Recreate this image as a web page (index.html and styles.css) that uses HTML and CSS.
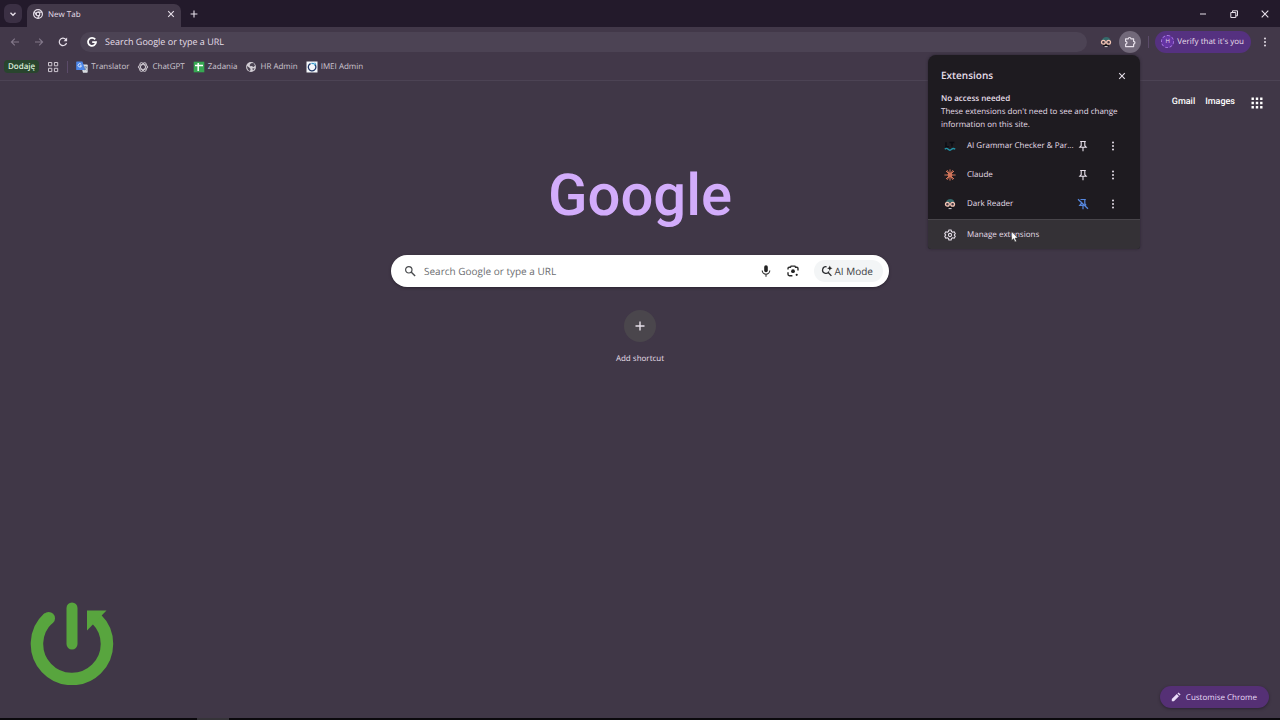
FILE: index.html
```html
<!DOCTYPE html>
<html lang="en">
<head>
  <meta charset="UTF-8">
  <title>New Tab</title>
  <link rel="stylesheet" href="styles.css">
</head>
<body>
<svg class="defs" aria-hidden="true">
  <symbol id="dots" viewBox="0 0 12 12"><circle cx="6" cy="2.4" r="1"/><circle cx="6" cy="6" r="1"/><circle cx="6" cy="9.6" r="1"/></symbol>
  <symbol id="close" viewBox="0 0 12 12"><path d="M3.2 3.2l5.6 5.6M8.8 3.2L3.2 8.8" fill="none" stroke="currentColor" stroke-width="1.1"/></symbol>
  <symbol id="plus" viewBox="0 0 12 12"><path d="M6 1.5v9M1.5 6h9" fill="none" stroke="currentColor" stroke-width="1.4"/></symbol>
  <symbol id="pin" viewBox="0 0 12 12"><path d="M3.2 1.5h5.6M4.2 1.5v4.2L2.8 7.3h6.4L7.8 5.7V1.5M6 7.3v4" fill="none" stroke="currentColor" stroke-width="1.1"/></symbol>
  <symbol id="reader" viewBox="0 0 12 12">
    <path d="M1.8 4.6C2.4 2.2 4 1 6.3 1c2.5 0 3.8 1.4 4.2 3.6z" fill="#346a6b"/>
    <path d="M2.5 8h7L8.6 10.6H3.5z" fill="#151318"/>
    <circle cx="3.4" cy="6.3" r="1.9" fill="#423844" stroke="#f4c6b5" stroke-width="1.3"/>
    <circle cx="8.6" cy="6.3" r="1.9" fill="#423844" stroke="#f4c6b5" stroke-width="1.3"/>
    <path d="M4.6 10.6h3" stroke="#d7d0d6" stroke-width="1"/>
  </symbol>
</svg>

<header class="browser">
  <div class="tabstrip">
    <button class="tab-search" aria-label="Search tabs"><svg class="ico" viewBox="0 0 12 12"><path d="M3.5 4.8L6 7.2l2.5-2.4" fill="none" stroke="currentColor" stroke-width="1.4"/></svg></button>
    <div class="tab">
      <svg class="ico" viewBox="0 0 12 12"><circle cx="6" cy="6" r="4.4" fill="none" stroke="currentColor" stroke-width="1.2"/><circle cx="6" cy="6" r="1.8" fill="none" stroke="currentColor" stroke-width="1.2"/><path d="M6 4.1h4M4.4 7L2.3 3.6M7.6 7l-2 3.5" stroke="currentColor" stroke-width="1.2"/></svg>
      <span class="tab-title">New Tab</span>
      <button class="plain" aria-label="Close tab"><svg class="ico"><use href="#close"/></svg></button>
    </div>
    <button class="plain new-tab" aria-label="New tab"><svg class="ico" viewBox="0 0 12 12"><path d="M6 2.6v6.8M2.6 6h6.8" stroke="currentColor" stroke-width="1.1"/></svg></button>
    <div class="window-buttons">
      <button class="plain" aria-label="Minimise"><svg class="ico" viewBox="0 0 12 12"><path d="M3 6h6" stroke="currentColor"/></svg></button>
      <button class="plain" aria-label="Restore"><svg class="ico" viewBox="0 0 12 12"><path d="M2.8 4.5h5v5h-5zM4.5 4.5V2.8h5v5H7.8" fill="none" stroke="currentColor"/></svg></button>
      <button class="plain" aria-label="Close"><svg class="ico" viewBox="0 0 12 12"><path d="M2.7 2.7l6.6 6.6M9.3 2.7L2.7 9.3" stroke="currentColor" stroke-width="1.1"/></svg></button>
    </div>
  </div>

  <div class="toolbar">
    <div class="nav">
      <button class="plain dim" aria-label="Back"><svg class="ico" viewBox="0 0 12 12"><path d="M10 6H2.5M5.8 2.6L2.4 6l3.4 3.4" fill="none" stroke="currentColor" stroke-width="1.1"/></svg></button>
      <button class="plain dim" aria-label="Forward"><svg class="ico" viewBox="0 0 12 12"><path d="M2 6h7.5M6.2 2.6L9.6 6 6.2 9.4" fill="none" stroke="currentColor" stroke-width="1.1"/></svg></button>
      <button class="plain" aria-label="Reload"><svg class="ico" viewBox="0 0 12 12"><path d="M9.5 7A3.7 3.7 0 1 1 8.8 3.5L9.6 4.4" fill="none" stroke="currentColor" stroke-width="1.2"/><path d="M10.1 1.6v3.6H6.6z" fill="currentColor"/></svg></button>
    </div>
    <label class="omnibox">
      <svg class="ico" viewBox="0 0 12 12"><path d="M9.2 3.4A4 4 0 1 0 10 6.2H6.2" fill="none" stroke="#fff" stroke-width="1.8"/></svg>
      <input type="text" aria-label="Address bar" placeholder="Search Google or type a URL">
    </label>
    <button class="plain reader" aria-label="Dark Reader"><svg class="ico"><use href="#reader"/></svg></button>
    <button class="puzzle" aria-label="Extensions"><svg class="ico" viewBox="0 0 12 12"><path d="M1.6 2.8h2.7a1.3 1.3 0 0 1 2.6 0h2.7v2.6a1.3 1.3 0 0 1 0 2.6v2.6H1.6V8.1a1.4 1.4 0 0 0 0-2.8z" fill="none" stroke="currentColor" stroke-width="1.2" stroke-linejoin="round"/></svg></button>
    <span class="divider"></span>
    <button class="verify"><span class="avatar">H</span>Verify that it's you</button>
    <button class="plain" aria-label="Menu"><svg class="ico"><use href="#dots"/></svg></button>
  </div>

  <nav class="bookmarks">
    <button class="group">Dodaję</button>
    <button class="plain" aria-label="Tab groups"><svg class="ico" viewBox="0 0 12 12"><path d="M1.5 1.5h3.3v3.3H1.5zM7.4 1.5h3.3v3.3H7.4zM1.5 7.3h3.3v3.3H1.5zM7.4 7.3h3.3v3.3H7.4z" fill="none" stroke="currentColor"/></svg></button>
    <span class="divider"></span>
    <a href="#"><svg class="ico" viewBox="0 0 12 12"><path d="M4.5 3.5H11a.7.7 0 0 1 .7.7v6.9a.7.7 0 0 1-.7.7H7z" fill="#d9dde2"/><path d="M.8.4h5.6l3 8.6H.8a.6.6 0 0 1-.6-.6V1a.6.6 0 0 1 .6-.6z" fill="#4c86e8"/><path d="M5.2 3.3a1.7 1.7 0 1 0 .3 1.5H4" fill="none" stroke="#fff" stroke-width=".8"/><path d="M7.6 6h3.4M9.3 5.2V6M10.4 6c-.3 1.5-1 2.4-2 3M8.4 7.2l2.1 2" fill="none" stroke="#66788f" stroke-width=".7"/></svg>Translator</a>
    <a href="#"><svg class="ico" viewBox="0 0 12 12"><g fill="none" stroke="#d0cad2" stroke-width=".9"><ellipse cx="6" cy="6" rx="4.7" ry="2.4"/><ellipse cx="6" cy="6" rx="4.7" ry="2.4" transform="rotate(60 6 6)"/><ellipse cx="6" cy="6" rx="4.7" ry="2.4" transform="rotate(120 6 6)"/></g></svg>ChatGPT</a>
    <a href="#"><svg class="ico" viewBox="0 0 12 12"><path d="M.7.7h10.6v10.6H.7z" fill="#36a852"/><path d="M2 4.6h8M5.2 2v8" stroke="#fff" stroke-width="1.5"/></svg>Zadania</a>
    <a href="#"><svg class="ico" viewBox="0 0 12 12"><circle cx="6" cy="6" r="4.9" fill="#d3ced5"/><path d="M2 5l2.2 1.6L5.6 8 5 10.2C3 9.4 2 7.5 2 5zM6 2.2l2.5-.3L10 4.4 8.8 6 6.5 5 5.3 5.3 4.6 4zM7.2 7.4l2.4-.2-1.5 2.3z" fill="#4c4453"/></svg>HR Admin</a>
    <a href="#"><svg class="ico" viewBox="0 0 12 12"><path d="M.5.5h11v11H.5z" fill="#f4f7fa"/><path d="M4.6 2.6A3.8 3.8 0 1 0 8.8 3.4" fill="none" stroke="#1f3566" stroke-width="1.3"/><path d="M5.4 2.4l2.6.2M8.6 1.8l1 1.5-1.4 1" fill="none" stroke="#3a9ccc" stroke-width="1.1"/></svg>IMEI Admin</a>
  </nav>
</header>

<main class="page">
  <nav class="top-links">
    <a href="#">Gmail</a>
    <a href="#">Images</a>
    <button class="plain" aria-label="Google apps"><svg class="ico" viewBox="0 0 12 12"><path d="M.5.5h2.4v2.4H.5zM4.8.5h2.4v2.4H4.8zM9.1.5h2.4v2.4H9.1zM.5 4.8h2.4v2.4H.5zM4.8 4.8h2.4v2.4H4.8zM9.1 4.8h2.4v2.4H9.1zM.5 9.1h2.4v2.4H.5zM4.8 9.1h2.4v2.4H4.8zM9.1 9.1h2.4v2.4H9.1z" fill="currentColor"/></svg></button>
  </nav>

  <h1 class="logo">Google</h1>

  <form class="search">
    <svg class="ico" viewBox="0 0 12 12"><circle cx="4.8" cy="4.8" r="3.2" fill="none" stroke="#494b4e" stroke-width="1.2"/><path d="M7.1 7.1l4 4" stroke="#494b4e" stroke-width="1.4"/></svg>
    <input type="text" aria-label="Search" placeholder="Search Google or type a URL">
    <button type="button" class="plain" aria-label="Voice search"><svg class="ico" viewBox="0 0 12 12"><rect x="4.2" y=".3" width="3.6" height="7" rx="1.8" fill="#222"/><path d="M2.2 5.6a3.8 3.6 0 0 0 7.6 0M6 9.2v2.5" fill="none" stroke="#333" stroke-width="1.1"/></svg></button>
    <button type="button" class="plain" aria-label="Image search"><svg class="ico" viewBox="0 0 12 12"><path d="M1 4.6V3.5c0-.7.5-1.2 1.2-1.2h1.2l.7-1.2h3.8l.7 1.2h1.2c.7 0 1.2.5 1.2 1.2v1.9M1 7.3v2c0 .8.6 1.4 1.4 1.4h3" fill="none" stroke="#2b2b2b" stroke-width="1.4"/><circle cx="6" cy="6.2" r="1.9" fill="#222"/><circle cx="9.7" cy="9.8" r="1.1" fill="#222"/></svg></button>
    <button type="button" class="ai-mode"><svg class="ico" viewBox="0 0 12 12"><path d="M5.6 1.8A3.3 3.3 0 1 0 7.9 6.4M6.9 7.3l3.5 3.6" fill="none" stroke="#2b2d30" stroke-width="1.3"/><path d="M8.8.6l.8 1.9 1.9.8-1.9.8-.8 1.9L8 4.1l-1.9-.8L8 2.5z" fill="#222"/></svg>AI Mode</button>
  </form>

  <button class="shortcut"><span class="circle"><svg class="ico"><use href="#plus"/></svg></span>Add shortcut</button>

  <footer class="bottom">
    <svg class="power" viewBox="0 0 84 84">
      <path d="M18.5 17A35 35 0 1 0 66.5 18" fill="none" stroke="#58a53e" stroke-width="12.5"/>
      <circle cx="18.7" cy="17.2" r="6.3" fill="#58a53e"/>
      <path d="M42 7v36" stroke="#58a53e" stroke-width="11" stroke-linecap="round"/>
      <path d="M57 9.5h19.5L57 29.5z" fill="#58a53e"/>
    </svg>
    <button class="customise"><svg class="ico" viewBox="0 0 12 12"><path d="M1.8 10.2V8.1l5-5 2.1 2.1-5 5zM7.5 2.4l1-1 2.1 2.1-1 1z" fill="currentColor"/></svg>Customise Chrome</button>
  </footer>
</main>
<div class="taskbar"><span></span></div>

<section class="extensions">
  <div class="ext-head">
    <h2>Extensions</h2>
    <button class="plain" aria-label="Close"><svg class="ico"><use href="#close"/></svg></button>
  </div>
  <div class="ext-info">
    <h3>No access needed</h3>
    <p>These extensions don't need to see and change information on this site.</p>
  </div>
  <ul>
    <li>
      <svg class="ico" viewBox="0 0 12 12"><path d="M2 2.2v4.4h2.8M5.5 2.5h4.8M8 2.5v4" fill="none" stroke="#0b0b12" stroke-width="1.4"/><path d="M.8 9.3c1.2-1.2 2.3-1.2 3.4 0s2.3 1.2 3.4 0 2.2-1.2 3.6 0" fill="none" stroke="#2292a6" stroke-width="1.4"/></svg>
      <span>AI Grammar Checker &amp; Par...</span>
      <button class="plain" aria-label="Pin"><svg class="ico"><use href="#pin"/></svg></button>
      <button class="plain" aria-label="More"><svg class="ico"><use href="#dots"/></svg></button>
    </li>
    <li>
      <svg class="ico" viewBox="0 0 12 12"><path d="M6 .4v11.2M.4 6h11.2M2 2l8 8M10 2l-8 8M3.2 1.2l5.6 9.6M8.8 1.2L3.2 10.8" stroke="#d0755a" stroke-width="1"/><circle cx="6" cy="6" r="2.4" fill="#d0755a"/></svg>
      <span>Claude</span>
      <button class="plain" aria-label="Pin"><svg class="ico"><use href="#pin"/></svg></button>
      <button class="plain" aria-label="More"><svg class="ico"><use href="#dots"/></svg></button>
    </li>
    <li>
      <svg class="ico"><use href="#reader"/></svg>
      <span>Dark Reader</span>
      <button class="plain pinned" aria-label="Unpin"><svg class="ico" viewBox="0 0 12 12"><path d="M3.5 1.5h5.3M7.8 1.5v4.2l1.3 1.6M4.2 3.5v2.2L2.8 7.3h4M6 7.3v4M1 1.2l10 9.6" fill="none" stroke="currentColor" stroke-width="1.2"/></svg></button>
      <button class="plain" aria-label="More"><svg class="ico"><use href="#dots"/></svg></button>
    </li>
  </ul>
  <button class="manage"><svg class="ico" viewBox="0 0 12 12"><path d="M4.9 1h2.2l.4 1.5 1.2.7 1.5-.4 1.1 1.9L10.2 6l1.1 1.3-1.1 1.9-1.5-.4-1.2.7-.4 1.5H4.9l-.4-1.5-1.2-.7-1.5.4L.7 7.3 1.8 6 .7 4.7l1.1-1.9 1.5.4 1.2-.7z" fill="none" stroke="currentColor" stroke-width="1.1" stroke-linejoin="round"/><circle cx="6" cy="6" r="1.6" fill="none" stroke="currentColor" stroke-width="1.1"/></svg>Manage extensions</button>
  <svg class="cursor" viewBox="0 0 8 12"><path d="M.6.6v9l2-1.9 1.4 3.2 1.5-.7-1.4-3.1h2.8z" fill="#fff" stroke="#222" stroke-width=".5"/></svg>
</section>
</body>
</html>
```
FILE: styles.css
```css
* { box-sizing: border-box; }

body {
    margin: 0;
    min-height: 100vh;
    display: flex;
    flex-direction: column;
    position: relative;
    background: #403747;
    color: #e6dfe9;
    font-family: "Open Sans", "Noto Sans", sans-serif;
    font-size: 8px;
    line-height: 13px;
    text-rendering: geometricPrecision;
}

button, input {
    font: inherit;
    color: inherit;
    text-rendering: inherit;
    border: 0;
    padding: 0;
    background: none;
}
a { color: inherit; text-decoration: none; }
h1, h2, h3, p, ul { margin: 0; padding: 0; }

.defs { position: absolute; width: 0; height: 0; }
.ico { width: 12px; height: 12px; flex: none; display: block; fill: currentColor; }
.plain { display: flex; }
.divider { width: 1px; height: 12px; background: #5b4b69; }

/* tab strip */
.tabstrip {
    display: flex;
    align-items: center;
    height: 27px;
    padding: 0 9px 0 4px;
    background: #231a2b;
}
.tab-search {
    width: 18px;
    height: 19px;
    padding: 3px;
    border-radius: 6px;
    background: #3b3044;
}
.tab {
    display: flex;
    align-items: center;
    align-self: flex-end;
    gap: 4px;
    width: 154px;
    height: 23px;
    margin-left: 5px;
    padding: 0 4px 3px 5px;
    border-radius: 7px 7px 0 0;
    background: #423849;
}
.tab-title { flex: 1; }
.new-tab { margin-left: 7px; }
.window-buttons { display: flex; gap: 19px; margin-left: auto; }

/* toolbar */
.toolbar {
    display: flex;
    align-items: center;
    height: 29px;
    padding: 0 9px;
    background: #423849;
}
.nav { display: flex; gap: 12px; margin-right: 11px; }
.dim { color: #83788a; }
.omnibox {
    flex: 1;
    display: flex;
    align-items: center;
    gap: 7px;
    height: 20px;
    padding: 0 6px;
    border-radius: 10px;
    background: #4c4354;
    font-size: 9px;
}
.omnibox input { flex: 1; outline: 0; }
.omnibox input::placeholder { color: #e6dfe9; }
.reader { margin: 0 7px 0 13px; }
.puzzle {
    width: 22px;
    height: 22px;
    padding: 5px;
    border-radius: 50%;
    background: #72697a;
}
.toolbar .divider { margin: 0 6px 0 7px; }
.verify {
    display: flex;
    align-items: center;
    gap: 3px;
    height: 22px;
    margin-right: 8px;
    padding: 0 7px 0 6px;
    border-radius: 11px;
    background: #553180;
}
.avatar {
    width: 13px;
    height: 13px;
    border: 1px dashed #ad7bea;
    border-radius: 50%;
    background: #6534a3;
    font-size: 6px;
    line-height: 11px;
    text-align: center;
}

/* bookmarks bar */
.bookmarks {
    display: flex;
    align-items: center;
    gap: 8px;
    height: 25px;
    padding: 0 4px 3px;
    background: #423849;
    border-bottom: 1px solid #4c4354;
    color: #cec7d1;
}
.bookmarks a { display: flex; align-items: center; gap: 3px; }
.group {
    padding: 0 4px;
    border-radius: 4px;
    background: #29452e;
    color: #dcefdc;
    font-weight: 600;
}

/* new tab page */
.page {
    flex: 1;
    display: flex;
    flex-direction: column;
    align-items: center;
}
.top-links {
    display: flex;
    align-items: center;
    align-self: flex-end;
    gap: 10px;
    padding: 14px 17px 0 0;
    color: #fff;
    font-family: Roboto, "Liberation Sans", sans-serif;
    font-size: 9px;
    font-weight: 500;
    line-height: 15px;
}
.top-links button { margin-left: 6px; }
.logo {
    margin-top: 50px;
    color: #d2acfb;
    font-family: Roboto, "Liberation Sans", sans-serif;
    font-size: 58px;
    font-weight: 500;
    line-height: 72px;
}
.search {
    display: flex;
    align-items: center;
    width: 498px;
    max-width: 90%;
    height: 32px;
    margin-top: 23px;
    padding: 0 6px 0 13px;
    border-radius: 16px;
    background: #fff;
    color: #3c4043;
    font-size: 10px;
    box-shadow: 0 1px 3px #2b2431;
}
.search input { flex: 1; margin-left: 8px; outline: 0; }
.search input::placeholder { color: #6b6d70; }
.search .plain { margin-right: 15px; }
.ai-mode {
    display: flex;
    align-items: center;
    gap: 2px;
    height: 22px;
    padding: 0 10px 0 7px;
    border-radius: 11px;
    background: #f3f5f6;
}
.shortcut {
    display: flex;
    flex-direction: column;
    align-items: center;
    gap: 10px;
    margin-top: 23px;
}
.circle { padding: 10px; border-radius: 50%; background: #4a464c; }
.bottom {
    display: flex;
    align-items: flex-end;
    justify-content: space-between;
    align-self: stretch;
    margin-top: auto;
    padding: 0 11px 10px 30px;
}
.power { width: 84px; height: 84px; margin-bottom: 23px; }
.customise {
    display: flex;
    align-items: center;
    gap: 4px;
    height: 22px;
    padding: 0 12px 0 10px;
    border-radius: 11px;
    background: #553075;
    color: #eadcf9;
    box-shadow: 0 1px 3px #2b2431;
}
.taskbar { height: 2px; padding-left: 197px; background: #0b090d; }
.taskbar span { display: block; width: 32px; height: 2px; background: #353338; }

/* extensions popup */
.extensions {
    position: absolute;
    top: 55px;
    right: 140px;
    width: 212px;
    border-radius: 8px 8px 3px 3px;
    background: #1e1b20;
    box-shadow: 0 0 3px #2b2431;
}
.ext-head {
    display: flex;
    align-items: center;
    justify-content: space-between;
    padding: 14px 12px 10px 13px;
}
.ext-head h2 { font-size: 10px; font-weight: 600; }
.ext-info { padding: 0 13px; }
.ext-info h3 { font-size: 8px; font-weight: 600; }
.extensions ul { padding-bottom: 1px; }
.extensions li {
    display: flex;
    align-items: center;
    height: 29px;
    padding: 0 21px 0 16px;
}
.extensions li span { flex: 1; margin-left: 11px; }
.extensions li button + button { margin-left: 18px; }
.pinned { color: #5687df; }
.manage {
    display: flex;
    align-items: center;
    gap: 11px;
    width: 100%;
    height: 30px;
    padding: 0 16px;
    border-top: 1px solid #48454a;
    border-radius: 0 0 3px 3px;
    background: #343136;
}
.cursor { position: absolute; left: 83px; bottom: 6px; width: 8px; height: 12px; }
```
